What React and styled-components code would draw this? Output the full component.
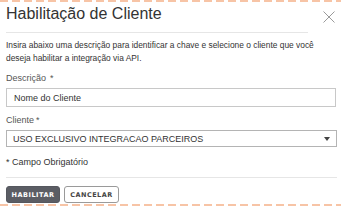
import React from "react";
import styled, { createGlobalStyle } from "styled-components";

const GlobalStyle = createGlobalStyle`
  html, body {
    margin: 0;
    padding: 0;
    background: #ffffff;
  }
  body {
    font-family: "Liberation Sans", Arial, sans-serif;
    color: #333333;
  }
`;

const DashedEdge = styled.div`
  height: 2px;
  flex-shrink: 0;
  background: repeating-linear-gradient(
    to right,
    #f7c4a6 0,
    #f7c4a6 8px,
    transparent 8px,
    transparent 12px
  );
`;

const Modal = styled.div`
  width: 341px;
  height: 206px;
  box-sizing: border-box;
  display: flex;
  flex-direction: column;
  overflow: hidden;
`;

const Header = styled.div`
  display: flex;
  align-items: flex-start;
  justify-content: space-between;
  padding: 2px 6px 0 6px;
`;

const TitleBlock = styled.div`
  flex: 1;
  margin-right: 14px;
  padding-bottom: 8px;
  border-bottom: 1px solid #e6e6e6;
`;

const Title = styled.h2`
  margin: 0;
  font-size: 16px;
  line-height: 20px;
  font-weight: 400;
  color: #333333;
`;

const CloseButton = styled.button`
  width: 13px;
  height: 13px;
  margin-top: 6px;
  padding: 0;
  border: none;
  background: none;
  cursor: pointer;
  display: flex;
  align-items: center;
  justify-content: center;
`;

const Body = styled.div`
  padding: 6px 4px 0 6px;
  display: flex;
  flex-direction: column;
`;

const Intro = styled.p`
  margin: 0 0 7px 0;
  font-size: 8.4px;
  line-height: 13px;
  color: #333333;
  width: 325px;
`;

const Label = styled.label`
  display: block;
  font-size: 9px;
  line-height: 12px;
  color: #555555;
  margin-bottom: 4px;
`;

const Star = styled.span`
  margin-left: ${(p) => p.$gap || "2px"};
`;

const TextInput = styled.input`
  box-sizing: border-box;
  width: 330px;
  height: 19px;
  border: 1px solid #c8c8c8;
  padding: 0 7px;
  font-family: "Liberation Sans", Arial, sans-serif;
  font-size: 9px;
  color: #333333;
  margin: 0 0 7px 0;
  outline: none;
`;

const SelectBox = styled.div`
  box-sizing: border-box;
  width: 331px;
  height: 17px;
  border: 1px solid #b4b4b4;
  padding: 0 6px 0 6px;
  display: flex;
  align-items: center;
  justify-content: space-between;
  font-size: 9px;
  color: #333333;
`;

const Caret = styled.span`
  width: 0;
  height: 0;
  border-left: 3px solid transparent;
  border-right: 3px solid transparent;
  border-top: 4px solid #444444;
`;

const Note = styled.p`
  margin: 9px 0 0 0;
  font-size: 9px;
  line-height: 12px;
  color: #333333;
`;

const Footer = styled.div`
  margin: 9px 4px 0 6px;
  padding-top: 8px;
  border-top: 1px solid #e6e6e6;
  display: flex;
  gap: 4px;
`;

const Button = styled.button`
  box-sizing: border-box;
  height: 17px;
  padding: 0;
  border-radius: 3px;
  font-family: "DejaVu Sans", Verdana, sans-serif;
  font-size: 6.5px;
  font-weight: 700;
  letter-spacing: 0.5px;
  cursor: pointer;
  border: 1px solid ${(p) => (p.$primary ? "#55575e" : "#9a9a9a")};
  background: ${(p) => (p.$primary ? "#5b5d64" : "#ffffff")};
  color: ${(p) => (p.$primary ? "#ffffff" : "#444444")};
  width: ${(p) => p.$width};
`;

const Spacer = styled.div`
  flex: 1;
`;

export default function App() {
  return (
    <>
      <GlobalStyle />
      <Modal>
        <DashedEdge />
        <Header>
          <TitleBlock>
            <Title>Habilitação de Cliente</Title>
          </TitleBlock>
          <CloseButton aria-label="Fechar">
            <svg width="12" height="12" viewBox="0 0 12 12">
              <path d="M0.5 0.5 L11.5 11.5 M11.5 0.5 L0.5 11.5" stroke="#9a9a9a" strokeWidth="1" fill="none" />
            </svg>
          </CloseButton>
        </Header>
        <Body>
          <Intro>
            Insira abaixo uma descrição para identificar a chave e selecione o cliente que você deseja habilitar a integração via API.
          </Intro>
          <Label>
            Descrição<Star $gap="4px">*</Star>
          </Label>
          <TextInput defaultValue="Nome do Cliente" />
          <Label>
            Cliente<Star>*</Star>
          </Label>
          <SelectBox>
            <span>USO EXCLUSIVO INTEGRACAO PARCEIROS</span>
            <Caret />
          </SelectBox>
          <Note>* Campo Obrigatório</Note>
        </Body>
        <Footer>
          <Button $primary $width="54px">HABILITAR</Button>
          <Button $width="55px">CANCELAR</Button>
        </Footer>
        <Spacer />
        <DashedEdge />
      </Modal>
    </>
  );
}
